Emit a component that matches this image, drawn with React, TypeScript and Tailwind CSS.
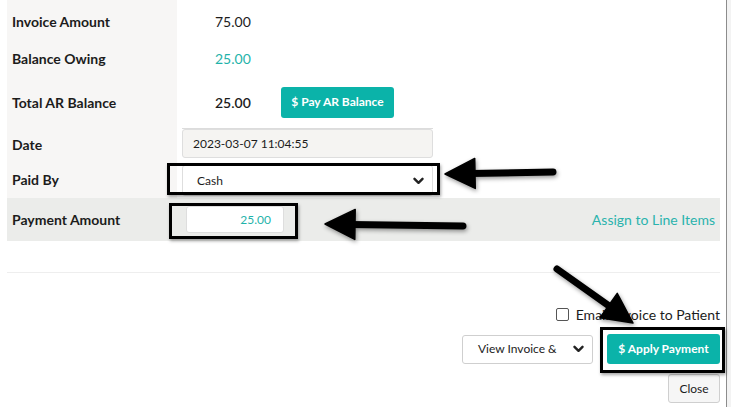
import React from "react";

const Chevron = () => (
  <svg width="11" height="8" viewBox="0 0 11 8" className="shrink-0">
    <path d="M1.5 1.8 L5.5 5.8 L9.5 1.8" fill="none" stroke="#222" strokeWidth="2.4" strokeLinecap="round" strokeLinejoin="round" />
  </svg>
);

function Arrow({ x1, y1, x2, y2 }: { x1: number; y1: number; x2: number; y2: number }) {
  // x1,y1 tail ; x2,y2 tip
  const dx = x2 - x1;
  const dy = y2 - y1;
  const len = Math.sqrt(dx * dx + dy * dy);
  const ux = dx / len;
  const uy = dy / len;
  const hl = 30;
  const hw = 15;
  const bx = x2 - ux * hl;
  const by = y2 - uy * hl;
  const px = -uy;
  const py = ux;
  const pts = `${x2},${y2} ${bx + px * hw},${by + py * hw} ${bx - px * hw},${by - py * hw}`;
  return (
    <g>
      <line x1={x1} y1={y1} x2={bx + ux * 4} y2={by + uy * 4} stroke="#000" strokeWidth="7" strokeLinecap="round" />
      <polygon points={pts} fill="#000" stroke="#000" strokeWidth="1.5" strokeLinejoin="round" />
    </g>
  );
}

export default function App() {
  return (
    <div className="relative w-[731px] h-[407px] overflow-hidden bg-white flex text-[#1c1c1c]" style={{ fontFamily: "Lato, 'Open Sans', sans-serif" }}>
      <div className="w-[727px] h-full border-r border-[#8c8c8c] pl-[7px]">
        <div className="w-[713px] flex flex-col">
          {/* Invoice Amount */}
          <div className="flex h-[42px]">
            <div className="w-[170px] bg-[#f7f6f5] pl-[5px] flex items-center text-[14px] font-bold">Invoice Amount</div>
            <div className="flex-1 flex items-center pl-[38px] text-[14px]">75.00</div>
          </div>
          {/* Balance Owing */}
          <div className="flex h-[32px]">
            <div className="w-[170px] bg-[#f7f6f5] pl-[5px] flex items-center text-[14px] font-bold">Balance Owing</div>
            <div className="flex-1 flex items-center pl-[38px] text-[14px] text-[#1fb3aa]">25.00</div>
          </div>
          {/* Total AR */}
          <div className="flex h-[55px]">
            <div className="w-[170px] bg-[#f7f6f5] pl-[5px] flex items-center text-[14px] font-bold pt-[2px]">Total AR Balance</div>
            <div className="flex-1">
              <div className="ml-[5px] w-[251px] h-full border-b border-[#dcdcdc] flex items-center pl-[33px] pt-[2px]">
                <span className="w-[66px] text-[14px] font-semibold">25.00</span>
                <button className="shrink-0 w-[113px] h-[31px] rounded-[3px] bg-[#0bb3a9] text-white text-[12px] font-bold">$ Pay AR Balance</button>
              </div>
            </div>
          </div>
          {/* Date */}
          <div className="flex h-[31px]">
            <div className="w-[170px] bg-[#f7f6f5] pl-[5px] flex items-center text-[14px] font-bold">Date</div>
            <div className="flex-1">
              <div className="ml-[5px] w-[251px] h-[29px] bg-[#f5f4f2] border border-[#dedede] rounded-[3px] flex items-center pl-[10px] text-[12px]">2023-03-07 11:04:55</div>
            </div>
          </div>
          {/* Paid By */}
          <div className="flex h-[38px]">
            <div className="w-[170px] bg-[#f7f6f5] pl-[5px] flex items-center text-[14px] font-bold">Paid By</div>
            <div className="flex-1 pt-[5px]">
              <div className="ml-[5px] w-[251px] h-[31px] bg-white border border-[#dedede] rounded-[3px] flex items-center justify-between pl-[14px] pr-[8px] text-[12px]">
                <span>Cash</span>
                <Chevron />
              </div>
            </div>
          </div>
          {/* Payment Amount */}
          <div className="flex h-[43px] bg-[#ebecea]">
            <div className="w-[170px] pl-[5px] flex items-center text-[14px] font-bold">Payment Amount</div>
            <div className="flex-1 flex items-center justify-between pr-[5px]">
              <div className="ml-[9px] w-[98px] h-[27px] bg-white border border-[#dedede] rounded-[3px] flex items-center justify-end pr-[12px] text-[12px] text-[#1fb3aa]">25.00</div>
              <span className="text-[14px] text-[#2ab3ad]">Assign to Line Items</span>
            </div>
          </div>

          <div className="mt-[31px] border-t border-[#eeeeee]" />

          <div className="flex flex-col items-end">
            <div className="mt-[31px] h-[20px] flex items-center gap-[7px]">
              <span className="w-[13px] h-[13px] border border-[#555] rounded-[2px] bg-white" />
              <span className="text-[14px]">Email Invoice to Patient</span>
            </div>
            <div className="mt-[10px] flex items-center gap-[14px]">
              <div className="w-[131px] h-[29px] bg-white border border-[#cfcfcf] rounded-[3px] flex items-center justify-between pl-[15px] pr-[8px] text-[12px]">
                <span>View Invoice &amp;</span>
                <Chevron />
              </div>
              <button className="w-[113px] h-[30px] rounded-[3px] bg-[#0bb3a9] text-white text-[12px] font-bold">$ Apply Payment</button>
            </div>
            <button className="mt-[10px] w-[52px] h-[29px] bg-[#f6f6f6] border border-[#cfcfcf] rounded-[3px] text-[12px]">Close</button>
          </div>
        </div>
      </div>
      <div className="flex-1 bg-[#f3f3f3]" />

      {/* annotation boxes */}
      <div className="absolute left-[167px] top-[163px] w-[273px] h-[32px] border-[3px] border-black shadow-[1px_2px_3px_rgba(0,0,0,0.35)]" />
      <div className="absolute left-[169px] top-[203px] w-[129px] h-[36px] border-[3px] border-black shadow-[1px_2px_3px_rgba(0,0,0,0.35)]" />
      <div className="absolute left-[600px] top-[327px] w-[125px] h-[46px] border-[3px] border-black shadow-[1px_2px_3px_rgba(0,0,0,0.35)]" />

      <svg className="absolute inset-0 pointer-events-none" width="731" height="407" style={{ filter: "drop-shadow(1px 2px 2px rgba(0,0,0,0.4))" }}>
        <Arrow x1={553} y1={172} x2={445} y2={174} />
        <Arrow x1={463} y1={226} x2={325} y2={224} />
        <Arrow x1={557} y1={269} x2={633} y2={323} />
      </svg>
    </div>
  );
}
